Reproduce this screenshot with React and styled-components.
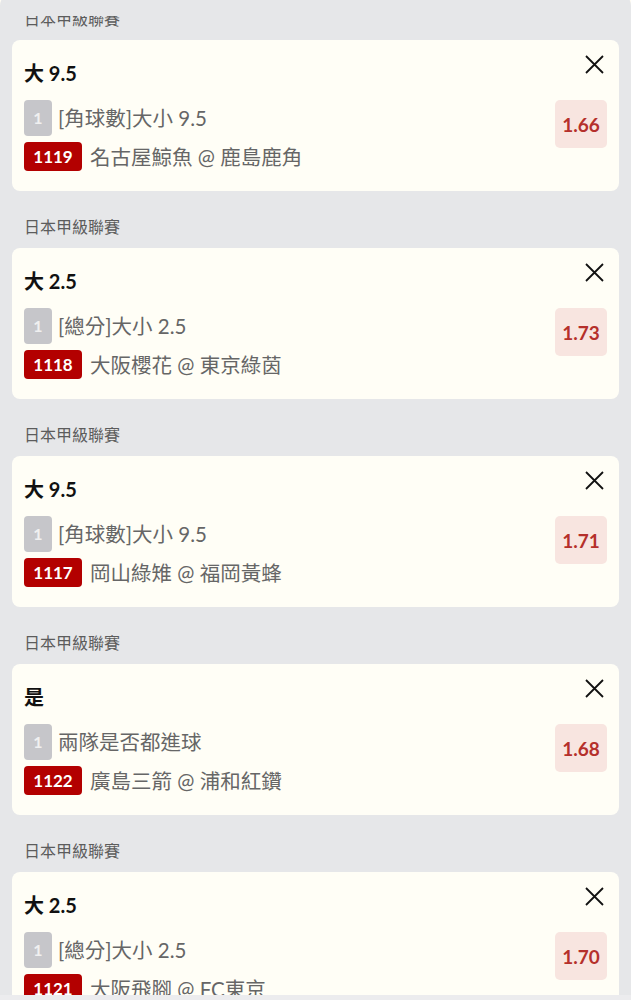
import React from "react";
import styled, { createGlobalStyle } from "styled-components";

const GlobalStyle = createGlobalStyle`
  html, body {
    margin: 0;
    padding: 0;
    background: #fffdf4;
    font-family: "Lato", "Noto Sans CJK TC", sans-serif;
  }
`;

const bets = [
  { title: "大 9.5", market: "[角球數]大小 9.5", code: "1119", match: "名古屋鯨魚 @ 鹿島鹿角", odds: "1.66" },
  { title: "大 2.5", market: "[總分]大小 2.5", code: "1118", match: "大阪櫻花 @ 東京綠茵", odds: "1.73" },
  { title: "大 9.5", market: "[角球數]大小 9.5", code: "1117", match: "岡山綠雉 @ 福岡黃蜂", odds: "1.71" },
  { title: "是", market: "兩隊是否都進球", code: "1122", match: "廣島三箭 @ 浦和紅鑽", odds: "1.68" },
  { title: "大 2.5", market: "[總分]大小 2.5", code: "1121", match: "大阪飛腳 @ FC東京", odds: "1.70" }
];

const Panel = styled.div`
  margin-top: -8px;
  padding-top: 24px;
  background: #e6e7e9;
  border-radius: 14px 14px 0 0;
  height: 1008px;
  box-sizing: border-box;
  display: flex;
  flex-direction: column;
`;

const Viewport = styled.div`
  height: 979px;
  overflow: hidden;
`;

const List = styled.div`
  margin-top: -33px;
  padding: 0 12px;
`;

const Footer = styled.div`
  flex: 1;
  background: #ececee;
`;

const League = styled.div`
  padding: 26px 12px 11px;
  line-height: 20px;
  height: 20px;
  font-size: 16px;
  font-weight: 400;
  color: #5c5c5c;
`;

const Card = styled.div`
  position: relative;
  background: #fffef6;
  border-radius: 8px;
  padding: 20px 12px;
`;

const Title = styled.div`
  font-size: 20px;
  font-weight: 700;
  line-height: 26px;
  height: 26px;
  color: #111;
`;

const Body = styled.div`
  margin-top: 14px;
  display: flex;
  justify-content: space-between;
  align-items: flex-start;
`;

const Lines = styled.div`
  display: flex;
  flex-direction: column;
  gap: 6px;
`;

const Row = styled.div`
  display: flex;
  align-items: center;
  gap: ${({ gap }) => gap}px;
  height: ${({ tall }) => (tall ? 36 : 29)}px;
  line-height: 26px;
  font-size: 20.5px;
  color: #666;
  white-space: nowrap;
`;

const Badge = styled.span`
  display: inline-flex;
  align-items: center;
  justify-content: center;
  border-radius: 4px;
  font-weight: 700;
  background: ${({ red }) => (red ? "#b30000" : "#c6c6ca")};
  height: ${({ red }) => (red ? 29 : 36)}px;
  min-width: ${({ red }) => (red ? 58 : 28)}px;
  font-size: ${({ red }) => (red ? 17 : 16)}px;
  color: ${({ red }) => (red ? "#fff" : "#f0f0f0")};
`;

const Odds = styled.div`
  width: 52px;
  height: 48px;
  border-radius: 5px;
  background: #f8e5e0;
  color: #b5302b;
  font-size: 19px;
  font-weight: 700;
  display: flex;
  align-items: center;
  justify-content: center;
`;

const Close = styled.button`
  position: absolute;
  top: 14px;
  right: 14px;
  width: 21px;
  height: 21px;
  padding: 0;
  border: none;
  background: none;
  display: flex;
`;

const CloseIcon = () => (
  <svg width="21" height="21" viewBox="0 0 21 21">
    <path d="M2 2 L19 19 M19 2 L2 19" stroke="#111" strokeWidth="1.8" fill="none" />
  </svg>
);

const BetCard = ({ bet }) => (
  <>
    <League>日本甲級聯賽</League>
    <Card>
      <Close aria-label="close">
        <CloseIcon />
      </Close>
      <Title>{bet.title}</Title>
      <Body>
        <Lines>
          <Row gap={6} tall>
            <Badge>1</Badge>
            <span>{bet.market}</span>
          </Row>
          <Row gap={8}>
            <Badge red>{bet.code}</Badge>
            <span>{bet.match}</span>
          </Row>
        </Lines>
        <Odds>{bet.odds}</Odds>
      </Body>
    </Card>
  </>
);

export default function App() {
  return (
    <>
      <GlobalStyle />
      <Panel>
        <Viewport>
          <List>
            {bets.map((bet, i) => (
              <BetCard key={i} bet={bet} />
            ))}
          </List>
        </Viewport>
        <Footer />
      </Panel>
    </>
  );
}
